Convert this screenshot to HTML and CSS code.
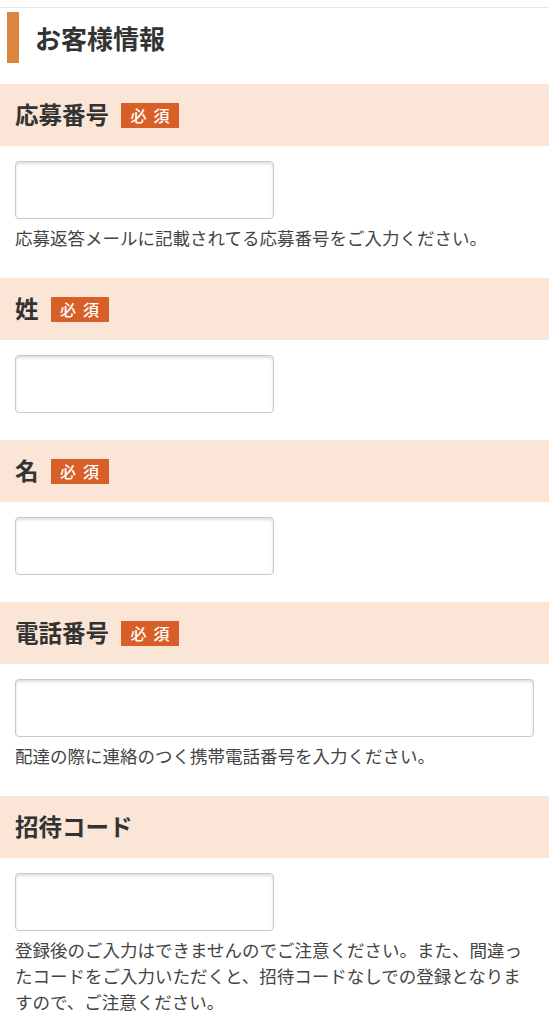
FILE: index.html
```html
<!DOCTYPE html>
<html lang="ja">
<head>
<meta charset="utf-8">
<title>お客様情報</title>
<link rel="stylesheet" href="styles.css">
</head>
<body>
<div class="page">
  <div class="topline"></div>
  <h1 class="title">お客様情報</h1>

  <section class="field">
    <div class="field-head"><span class="label">応募番号</span><span class="badge"><span>必</span><span>須</span></span></div>
    <div class="field-body">
      <input class="input" type="text">
      <p class="help">応募返答メールに記載されてる応募番号をご入力ください。</p>
    </div>
  </section>

  <section class="field">
    <div class="field-head"><span class="label">姓</span><span class="badge"><span>必</span><span>須</span></span></div>
    <div class="field-body">
      <input class="input" type="text">
    </div>
  </section>

  <section class="field">
    <div class="field-head"><span class="label">名</span><span class="badge"><span>必</span><span>須</span></span></div>
    <div class="field-body">
      <input class="input" type="text">
    </div>
  </section>

  <section class="field">
    <div class="field-head"><span class="label">電話番号</span><span class="badge"><span>必</span><span>須</span></span></div>
    <div class="field-body">
      <input class="input input-wide" type="tel">
      <p class="help">配達の際に連絡のつく携帯電話番号を入力ください。</p>
    </div>
  </section>

  <section class="field">
    <div class="field-head"><span class="label">招待コード</span></div>
    <div class="field-body">
      <input class="input" type="text">
      <p class="help">登録後のご入力はできませんのでご注意ください。また、間違ったコードをご入力いただくと、招待コードなしでの登録となりますので、ご注意ください。</p>
    </div>
  </section>
</div>
</body>
</html>
```

FILE: styles.css
```css
* { box-sizing: border-box; }
html, body { margin: 0; padding: 0; background: #fff; }
body {
  font-family: "Noto Sans CJK JP", "Noto Sans", sans-serif;
  color: #333;
}
.page { width: 549px; overflow: hidden; }
.topline {
  margin-top: 7px;
  height: 1px;
  background: #e6e6e6;
}
.title {
  margin: 4px 0 21px 7px;
  height: 51px;
  border-left: 12px solid #dc853f;
  padding-left: 16px;
  display: flex;
  align-items: center;
  font-size: 26px;
  font-weight: 700;
  color: #333;
  line-height: 1;
}
.field-head {
  height: 62px;
  background: #fae5d6;
  display: flex;
  align-items: center;
  padding-left: 15px;
}
.label {
  font-size: 23.5px;
  font-weight: 700;
  color: #333;
  line-height: 1;
}
.badge {
  margin-left: 12px;
  height: 25px;
  width: 58px;
  background: #d85f28;
  color: #fff;
  display: inline-flex;
  align-items: center;
  justify-content: center;
  gap: 7px;
  font-size: 16px;
  font-weight: 500;
  line-height: 1;
}
.field-body {
  padding: 15px 15px 27px;
}
.input {
  display: block;
  width: 259px;
  height: 58px;
  margin: 0;
  border: 1px solid #c9c9c9;
  border-radius: 4px;
  background: #fff;
  box-shadow: inset 0 2px 3px rgba(0, 0, 0, 0.13);
  font-size: 17px;
  padding: 0 10px;
  outline: none;
}
.input-wide { width: 519px; }
.help {
  margin: 6px 0 0;
  font-size: 17.5px;
  line-height: 26px;
  color: #444;
}
```
